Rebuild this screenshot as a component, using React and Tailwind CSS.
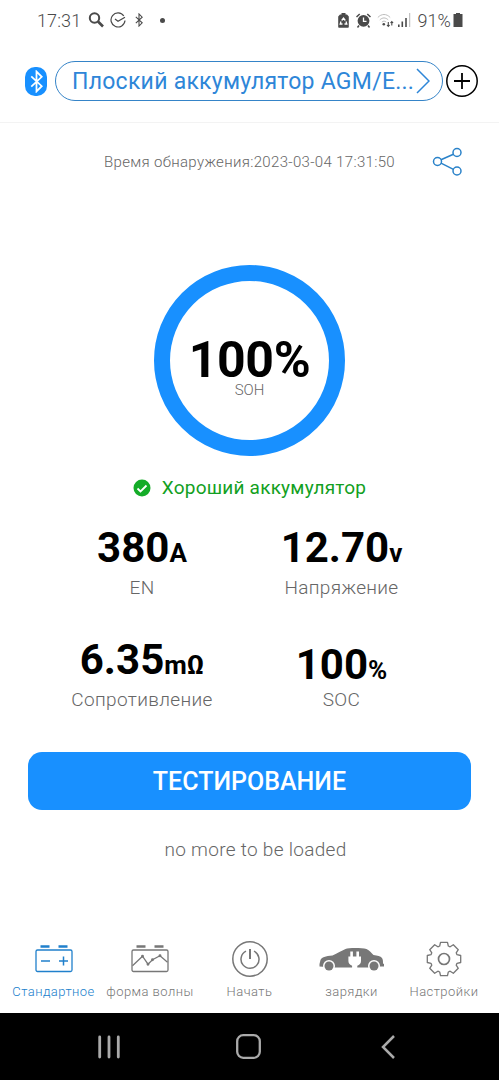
import React, { useState } from "react";

const stats = [
  { id: 1, value: "380", unit: "A", label: "EN" },
  { id: 2, value: "12.70", unit: "v", label: "Напряжение" },
  { id: 3, value: "6.35", unit: "mΩ", label: "Сопротивление" },
  { id: 4, value: "100", unit: "%", label: "SOC" },
];

const statStyles = {
  1: "w-[284px]",
  2: "w-[115px]",
  3: "w-[284px]",
  4: "w-[115px] pt-[5px]",
};

function BluetoothGlyph({ className, strokeWidth }) {
  return (
    <svg className={className} viewBox="0 0 12 22" fill="none" stroke="currentColor" strokeWidth={strokeWidth}>
      <path d="M1 6l10 9.500L6 20.500v-19l5 5L1 16" />
    </svg>
  );
}

function StatusBar() {
  return (
    <div className="flex h-10 items-center pl-[37px] pr-[36px] text-[#4a4a4a]">
      <span className="mt-[2px] w-[51px] text-[18px] font-light leading-none tracking-[0.1px]">17:31</span>
      <svg className="h-4 w-4" viewBox="0 0 16 16" fill="none" stroke="currentColor" strokeWidth="2">
        <circle cx="6.500" cy="6" r="4.700" />
        <path d="M10 9.500l5 5" strokeWidth="2.600" />
      </svg>
      <svg className="ml-[6px] h-4 w-4" viewBox="0 0 16 16" fill="none" stroke="currentColor" strokeWidth="1.200">
        <path d="M13.800 4A7 7 0 1 0 15 8.500" />
        <path d="M5 7l3 2.200 7-4" />
      </svg>
      <BluetoothGlyph className="ml-[9px] h-[14px] w-2" strokeWidth="1.700" />
      <span className="ml-[17px] h-[5px] w-[5px] rounded-full bg-[#4a4a4a]" />

      <svg className="ml-auto h-[15px] w-[11px]" viewBox="0 0 11 15">
        <path d="M3.500 0h4v1.500H9l1.800 2V14c0 .5-.3.800-.8.800H1c-.5 0-.8-.3-.8-.8V3.500l1.800-2h1.500z" fill="currentColor" />
        <path d="M3.700 7.500l1.800-2.500 1.800 2.500M8 8.500l.8 2.500H6.500M4.500 11H2.200L3 8.500" fill="none" stroke="#fff" strokeWidth="1.300" />
      </svg>
      <svg className="ml-[7px] h-[15px] w-[15px]" viewBox="0 0 15 15">
        <circle cx="7.500" cy="7.800" r="5.900" fill="currentColor" />
        <path d="M.5 4L3.700 1M14.500 4L11.300 1M3 12.500L1.500 14.500M12 12.500l1.500 2" stroke="currentColor" strokeWidth="1.500" />
        <path d="M7.500 4.500v3.800h3" stroke="#fff" strokeWidth="1.300" fill="none" />
      </svg>
      <svg className="ml-[6px] h-[15px] w-[17px]" viewBox="0 0 17 15" fill="none">
        <path d="M.8 4.500C4.500.5 9.500.5 13.200 4.500M2.800 6.900c2.600-2.600 5.800-2.600 8.400 0M4.900 9.100c1.300-1.300 3-1.300 4.300 0" stroke="#bdbdbd" />
        <circle cx="6.800" cy="11.200" r="1.300" fill="currentColor" />
        <path d="M11.300 9v4.500M10 12l1.300 1.500 1.300-1.500M14.800 12.500V8.500M13.500 10l1.300-1.500L16.100 10" stroke="currentColor" strokeWidth="1.100" />
      </svg>
      <svg className="ml-[4px] h-[14px] w-[13px]" viewBox="0 0 13 14">
        <path d="M0 11.500h1.600V14H0zM3.500 8.500h1.600V14H3.500zM7.200 5h1.600v9H7.200z" fill="currentColor" />
        <path d="M11.200 0h1v14h-1z" fill="#b5b5b5" />
      </svg>
      <span className="ml-[6px] mt-[2px] text-[18px] font-light leading-none tracking-[0.1px]">91%</span>
      <svg className="ml-[2px] h-[14px] w-[10px]" viewBox="0 0 10 14" fill="currentColor">
        <path d="M3 0h4v1h2.500v13h-9V1H3z" />
      </svg>
    </div>
  );
}

function Header() {
  return (
    <header className="flex h-[83px] items-center border-b border-[#f3f3f3] pl-[25px] pr-[20px]">
      <div className="flex h-[29px] w-[22px] items-center justify-center rounded-[10px] bg-[#1890ff] text-white">
        <BluetoothGlyph className="h-[23px] w-[13px]" strokeWidth="1.700" />
      </div>
      <button className="ml-[8px] flex h-10 w-[388px] items-center rounded-full border border-[#3584c8] pl-[16px] text-[#2e86d8]">
        <span className="w-[344px] whitespace-nowrap text-left text-[23px] leading-none tracking-[0.26px]">
          Плоский аккумулятор AGM/E...
        </span>
        <svg className="h-[26px] w-[14px] shrink-0" viewBox="0 0 14 26" fill="none" stroke="currentColor" strokeWidth="1.500">
          <path d="M1 1l12 12L1 25" />
        </svg>
      </button>
      <svg className="ml-[3px] h-[32px] w-[32px] shrink-0" viewBox="0 0 32 32" fill="none" stroke="#000">
        <circle cx="16" cy="16" r="15.200" strokeWidth="1.500" />
        <path d="M16 8v16M8 16h16" strokeWidth="1.800" />
      </svg>
    </header>
  );
}

function BatteryCase({ children }) {
  return (
    <svg className="h-[36px] w-[38px]" viewBox="0 0 38 36" fill="none" stroke="currentColor" strokeWidth="1.300">
      <path d="M5.500 5.500h9M23.500 5.500h9" strokeWidth="2.600" />
      <rect x="1" y="9" width="36" height="21.500" rx="1.500" />
      {children}
    </svg>
  );
}

const tabs = [
  {
    id: "standard",
    label: "Стандартное",
    width: "w-[107px]",
    icon: (
      <BatteryCase>
        <path d="M6 20h9M24 20h9M28.500 15.500v9" strokeWidth="1.500" />
      </BatteryCase>
    ),
  },
  {
    id: "wave",
    label: "форма волны",
    width: "w-[86px]",
    icon: (
      <BatteryCase>
        <path d="M1.500 24.700l10-9.500 5.500 8 4.500-4.500 7.500-4 7.500 6.500" />
        <circle cx="11.500" cy="15.200" r=".8" />
        <circle cx="17" cy="23.200" r=".8" />
        <circle cx="21.500" cy="18.700" r=".8" />
        <circle cx="29" cy="14.700" r=".8" />
      </BatteryCase>
    ),
  },
  {
    id: "start",
    label: "Начать",
    width: "w-[113px]",
    icon: (
      <svg className="h-[36px] w-[36px]" viewBox="0 0 36 36" fill="none" stroke="currentColor" strokeWidth="1.500">
        <circle cx="18" cy="18" r="17.200" />
        <path d="M14 10.200a9 9 0 1 0 8 0" />
        <path d="M18 8v10" strokeWidth="2" />
      </svg>
    ),
  },
  {
    id: "charge",
    label: "зарядки",
    width: "w-[91px]",
    icon: (
      <svg className="h-[36px] w-[65px]" viewBox="0 0 65 36">
        <path
          d="M.5 25.500v-2.500l1-4c1-2.800 5-4 12-4.500 5-2.500 9-4.500 13-6.500 3-1.300 16-1.300 21 0 3 1.300 5 4 7 6 4 .5 7 1.200 8.500 3 1 1.500 1 3.500 1 5.500l1 .5v2.500h-5l-10 1H14z"
          fill="currentColor"
        />
        <circle cx="10" cy="25" r="6" fill="#fff" />
        <circle cx="55" cy="25" r="6" fill="#fff" />
        <circle cx="10" cy="25" r="4.500" fill="currentColor" />
        <circle cx="55" cy="25" r="4.500" fill="currentColor" />
        <path d="M31.300 10.500h2.600v5h3.500v-5h2.600v5h2v4.500c0 2.500-1.500 4-3.700 4.700v2.800h-5.200v-2.800c-2-.7-3.700-2.200-3.700-4.700v-4.500h1.900z" fill="#fff" />
      </svg>
    ),
  },
  {
    id: "settings",
    label: "Настройки",
    width: "w-[94px]",
    icon: (
      <svg className="h-[36px] w-[36px]" viewBox="0 0 36 36" fill="none" stroke="currentColor" strokeWidth="1.300">
        <path
          d="M13.700 5l.8-3.700h7l.8 3.700 1.850.8 3.180-2.080 4.950 4.950-2.080 3.180.8 1.850 3.700.8v7l-3.700.8-.8 1.850 2.080 3.180-4.950 4.950-3.180-2.080-1.850.8-.8 3.700h-7l-.8-3.700-1.850-.8-3.180 2.080-4.950-4.950 2.080-3.180-.8-1.850-3.700-.8v-7l3.700-.8.8-1.850-2.080-3.180 4.950-4.950 3.180 2.080z"
          strokeLinejoin="round"
        />
        <circle cx="18" cy="18" r="5.500" strokeWidth="1.700" />
      </svg>
    ),
  },
];

export default function App() {
  const [activeTab, setActiveTab] = useState("standard");

  return (
    <div className="flex h-[1080px] w-[499px] flex-col overflow-hidden bg-white font-[Roboto,sans-serif]">
      <StatusBar />
      <Header />

      <main className="flex flex-1 flex-col">
        {/* Detection time */}
        <div className="mt-[21px] flex h-[34px] items-center pl-[104px]">
          <span className="mt-[2px] w-[328px] whitespace-nowrap text-[15px] font-light leading-none tracking-[0.33px] text-[#666]">
            Время обнаружения:2023-03-04 17:31:50
          </span>
          <svg className="h-[30px] w-[30px]" viewBox="0 0 30 30" fill="none" stroke="#2a82c9" strokeWidth="1.500">
            <circle cx="5.500" cy="15.500" r="4" />
            <circle cx="25" cy="6.500" r="4" />
            <circle cx="25" cy="25" r="4" />
            <path d="M9 13.700l12.400-5.500M9 17.200l12.400 6.100" />
          </svg>
        </div>

        {/* State of health */}
        <div className="mx-auto mt-[87px] flex h-[191px] w-[191px] flex-col items-center rounded-full border-[16.5px] border-[#1890ff] pt-[58px]">
          <span className="text-[50px] font-bold leading-[42px] tracking-[-0.4px] text-black">100%</span>
          <span className="mt-px text-[15px] font-light leading-[16px] text-[#666]">SOH</span>
        </div>
        <div className="mt-[19px] flex h-6 items-center justify-center text-[#12a022]">
          <svg className="mr-[11px] mt-[2px] h-[18px] w-[18px]" viewBox="0 0 18 18" fill="none">
            <circle cx="9" cy="9" r="8.500" fill="#14ac28" />
            <path d="M4.500 9.500l3 3 6-6" stroke="#fff" strokeWidth="1.800" />
          </svg>
          <span className="text-[19px] leading-none tracking-[0.22px]">Хороший аккумулятор</span>
        </div>

        {/* Measurements */}
        <div className="mt-[28px] flex flex-wrap">
          {stats.map((item) => (
            <div key={item.id} className={`flex h-[112px] flex-col items-center ${statStyles[item.id]}`}>
              <p className="whitespace-nowrap text-[42px] font-bold leading-[42px] text-black">
                {item.value}
                <span className="text-[26px]">{item.unit}</span>
              </p>
              <p className={`text-[19px] font-light tracking-[0.35px] text-[#666] ${item.id === 4 ? "-mt-[5px]" : ""}`}>
                {item.label}
              </p>
            </div>
          ))}
        </div>

        <button className="mx-[28px] mt-[1px] h-[58px] rounded-[14px] bg-[#1890ff] pt-[2px] text-[25px] font-medium text-white">
          ТЕСТИРОВАНИЕ
        </button>
        <p className="mt-[26px] pl-3 text-center text-[19px] font-light tracking-[0.3px] text-[#666]">
          no more to be loaded
        </p>
      </main>

      <nav className="flex h-[72px] shrink-0 text-[#777]">
        {tabs.map((tab) => (
          <button
            key={tab.id}
            onClick={() => setActiveTab(tab.id)}
            className={`flex shrink-0 flex-col items-center ${tab.width} ${activeTab === tab.id ? "text-[#2080cc]" : ""}`}
          >
            {tab.icon}
            <span className="mt-[7px] whitespace-nowrap text-[13px] font-light leading-4 tracking-[0.45px]">{tab.label}</span>
          </button>
        ))}
      </nav>

      {/* Android navigation */}
      <div className="flex h-[67px] shrink-0 items-center bg-black pl-[98px]">
        <svg className="h-6 w-[22px]" viewBox="0 0 22 24" stroke="#aaa" strokeWidth="2.800" strokeLinecap="round">
          <path d="M1.700 2v20M11 2v20M20.300 2v20" />
        </svg>
        <svg className="ml-[116px] h-[25px] w-[25px]" viewBox="0 0 25 25" fill="none" stroke="#aaa" strokeWidth="2.300">
          <rect x="1.200" y="1.200" width="22.600" height="22.600" rx="6" />
        </svg>
        <svg className="ml-[120px] h-6 w-[14px]" viewBox="0 0 14 24" fill="none" stroke="#aaa" strokeWidth="2.500">
          <path d="M13 1L2 12l11 11" />
        </svg>
      </div>
    </div>
  );
}
